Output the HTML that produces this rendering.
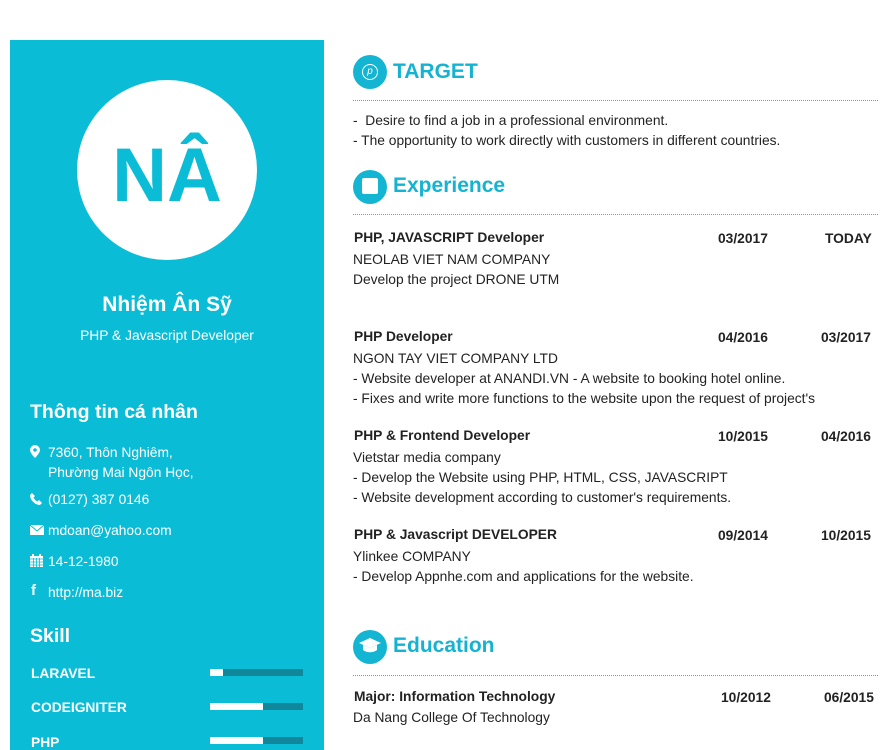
<!DOCTYPE html>
<html><head><meta charset="utf-8"><style>
body{margin:0;width:894px;height:750px;background:#fff;font-family:"Liberation Sans",Arial,sans-serif;position:relative;overflow:hidden;color:#222}
.a{position:absolute;white-space:nowrap}
#side{position:absolute;left:10px;top:40px;width:314px;height:710px;background:#0bbcd6}
.w{color:#fff}
.bar{position:absolute;left:210px;width:93px;height:7px;background:#11879b}
.bar i{display:block;height:7px;background:#fff}
.ic{position:absolute;width:34px;height:34px;border-radius:50%;background:#13b5d3}
.h{position:absolute;color:#14b3d2;font-weight:bold;font-size:21px}
.dl{position:absolute;left:353px;width:525px;height:1px;background:repeating-linear-gradient(90deg,#3fb3cc 0 1px,transparent 1px 2px)}
.t{font-size:13.8px;color:#222}
.b{font-weight:bold;font-size:13.8px;color:#222}
</style></head><body>
<div id="side"></div>
<div class="a" style="left:77px;top:80px;width:180px;height:180px;border-radius:50%;background:#fff"></div>
<div class="a" style="left:77px;top:126px;width:180px;text-align:center;color:#0bbcd6;font-weight:bold;font-size:76px;line-height:100px">NÂ</div>
<div class="a w" style="left:10px;width:314px;text-align:center;top:293px;font-size:21px;font-weight:bold">Nhiệm Ân Sỹ</div>
<div class="a w" style="left:10px;width:314px;text-align:center;top:328px;font-size:13.8px">PHP &amp; Javascript Developer</div>
<div class="a w" style="left:30px;top:401px;font-size:19.5px;font-weight:bold">Thông tin cá nhân</div>
<svg class="a" style="left:30px;top:445px" width="10" height="13" viewBox="0 0 10 13"><path d="M5 0a5 5 0 0 1 5 5c0 3-5 8-5 8S0 8 0 5a5 5 0 0 1 5-5z" fill="#fff"/><circle cx="5" cy="5" r="1.8" fill="#0bbcd6"/></svg>
<div class="a w" style="left:48px;top:443px;font-size:13.8px;line-height:20px">7360, Thôn Nghiêm,<br>Phường Mai Ngôn Học,</div>
<svg class="a" style="left:30px;top:493px" width="12" height="12" viewBox="0 0 12 12"><path d="M2 0l3 3-1.5 1.5c1 2 2 3 4 4L9 7l3 3-2 2C5 12 0 7 0 2z" fill="#fff"/></svg>
<div class="a w" style="left:48px;top:492px;font-size:13.8px">(0127) 387 0146</div>
<svg class="a" style="left:30px;top:525px" width="14" height="10" viewBox="0 0 14 10"><rect width="14" height="10" fill="#fff"/><path d="M0 0l7 6 7-6" stroke="#0bbcd6" fill="none"/></svg>
<div class="a w" style="left:48px;top:523px;font-size:13.8px">mdoan@yahoo.com</div>
<svg class="a" style="left:30px;top:554px" width="13" height="13" viewBox="0 0 13 13"><rect y="2" width="13" height="11" fill="#fff"/><path d="M0 5h13M0 8h13M0 11h13M3.5 4v9M6.5 4v9M9.5 4v9" stroke="#0bbcd6" stroke-width=".8"/><rect x="2" width="2" height="3" fill="#fff"/><rect x="9" width="2" height="3" fill="#fff"/></svg>
<div class="a w" style="left:48px;top:554px;font-size:13.8px">14-12-1980</div>
<div class="a w" style="left:31px;top:582px;font-size:15px;font-weight:bold">f</div>
<div class="a w" style="left:48px;top:585px;font-size:13.8px">http://ma.biz</div>
<div class="a w" style="left:30px;top:625px;font-size:19.5px;font-weight:bold">Skill</div>
<div class="a w" style="left:31px;top:666px;font-size:13.8px;font-weight:bold">LARAVEL</div>
<div class="bar" style="top:669px"><i style="width:13px"></i></div>
<div class="a w" style="left:31px;top:700px;font-size:13.8px;font-weight:bold">CODEIGNITER</div>
<div class="bar" style="top:703px"><i style="width:53px"></i></div>
<div class="a w" style="left:31px;top:735px;font-size:13.8px;font-weight:bold">PHP</div>
<div class="bar" style="top:737px"><i style="width:53px"></i></div>

<div class="ic" style="left:353px;top:55px"></div>
<div class="a" style="left:362px;top:64px;width:14px;height:14px;border:1px solid #fff;border-radius:50%;color:#fff;font-size:10px;text-align:center;line-height:14px;font-style:italic">p</div>
<div class="h" style="left:393px;top:60px">TARGET</div>
<div class="dl" style="top:100px"></div>
<div class="a t" style="left:353px;top:111px;line-height:20px">-&nbsp; Desire to find a job in a professional environment.<br>- The opportunity to work directly with customers in different countries.</div>
<div class="ic" style="left:353px;top:170px"></div>
<div class="a" style="left:362px;top:178px;width:16px;height:16px;background:#fff;border-radius:2px"></div>
<div class="h" style="left:393px;top:174px">Experience</div>
<div class="dl" style="top:214px"></div>

<div class="a b" style="left:354px;top:230px">PHP, JAVASCRIPT Developer</div>
<div class="a b" style="left:718px;top:231px">03/2017</div><div class="a b" style="left:825px;top:231px">TODAY</div>
<div class="a t" style="left:353px;top:250px;line-height:20px">NEOLAB VIET NAM COMPANY<br>Develop the project DRONE UTM</div>

<div class="a b" style="left:354px;top:329px">PHP Developer</div>
<div class="a b" style="left:718px;top:330px">04/2016</div><div class="a b" style="left:821px;top:330px">03/2017</div>
<div class="a t" style="left:353px;top:349px;line-height:20px">NGON TAY VIET COMPANY LTD<br>- Website developer at ANANDI.VN - A website to booking hotel online.<br>- Fixes and write more functions to the website upon the request of project's</div>

<div class="a b" style="left:354px;top:428px">PHP &amp; Frontend Developer</div>
<div class="a b" style="left:718px;top:429px">10/2015</div><div class="a b" style="left:821px;top:429px">04/2016</div>
<div class="a t" style="left:353px;top:448px;line-height:20px">Vietstar media company<br>- Develop the Website using PHP, HTML, CSS, JAVASCRIPT<br>- Website development according to customer's requirements.</div>

<div class="a b" style="left:354px;top:527px">PHP &amp; Javascript DEVELOPER</div>
<div class="a b" style="left:718px;top:528px">09/2014</div><div class="a b" style="left:821px;top:528px">10/2015</div>
<div class="a t" style="left:353px;top:547px;line-height:20px">Ylinkee COMPANY<br>- Develop Appnhe.com and applications for the website.</div>

<div class="ic" style="left:353px;top:630px"></div>
<svg class="a" style="left:358px;top:637px" width="24" height="18" viewBox="0 0 24 18"><path d="M12 1L1 6l11 5 11-5z" fill="#fff"/><path d="M5 8v5c4 3 10 3 14 0V8l-7 3z" fill="#fff"/></svg>
<div class="h" style="left:393px;top:634px">Education</div>
<div class="dl" style="top:675px"></div>
<div class="a b" style="left:354px;top:689px">Major: Information Technology</div>
<div class="a b" style="left:721px;top:690px">10/2012</div><div class="a b" style="left:824px;top:690px">06/2015</div>
<div class="a t" style="left:353px;top:710px">Da Nang College Of Technology</div>
</body></html>
